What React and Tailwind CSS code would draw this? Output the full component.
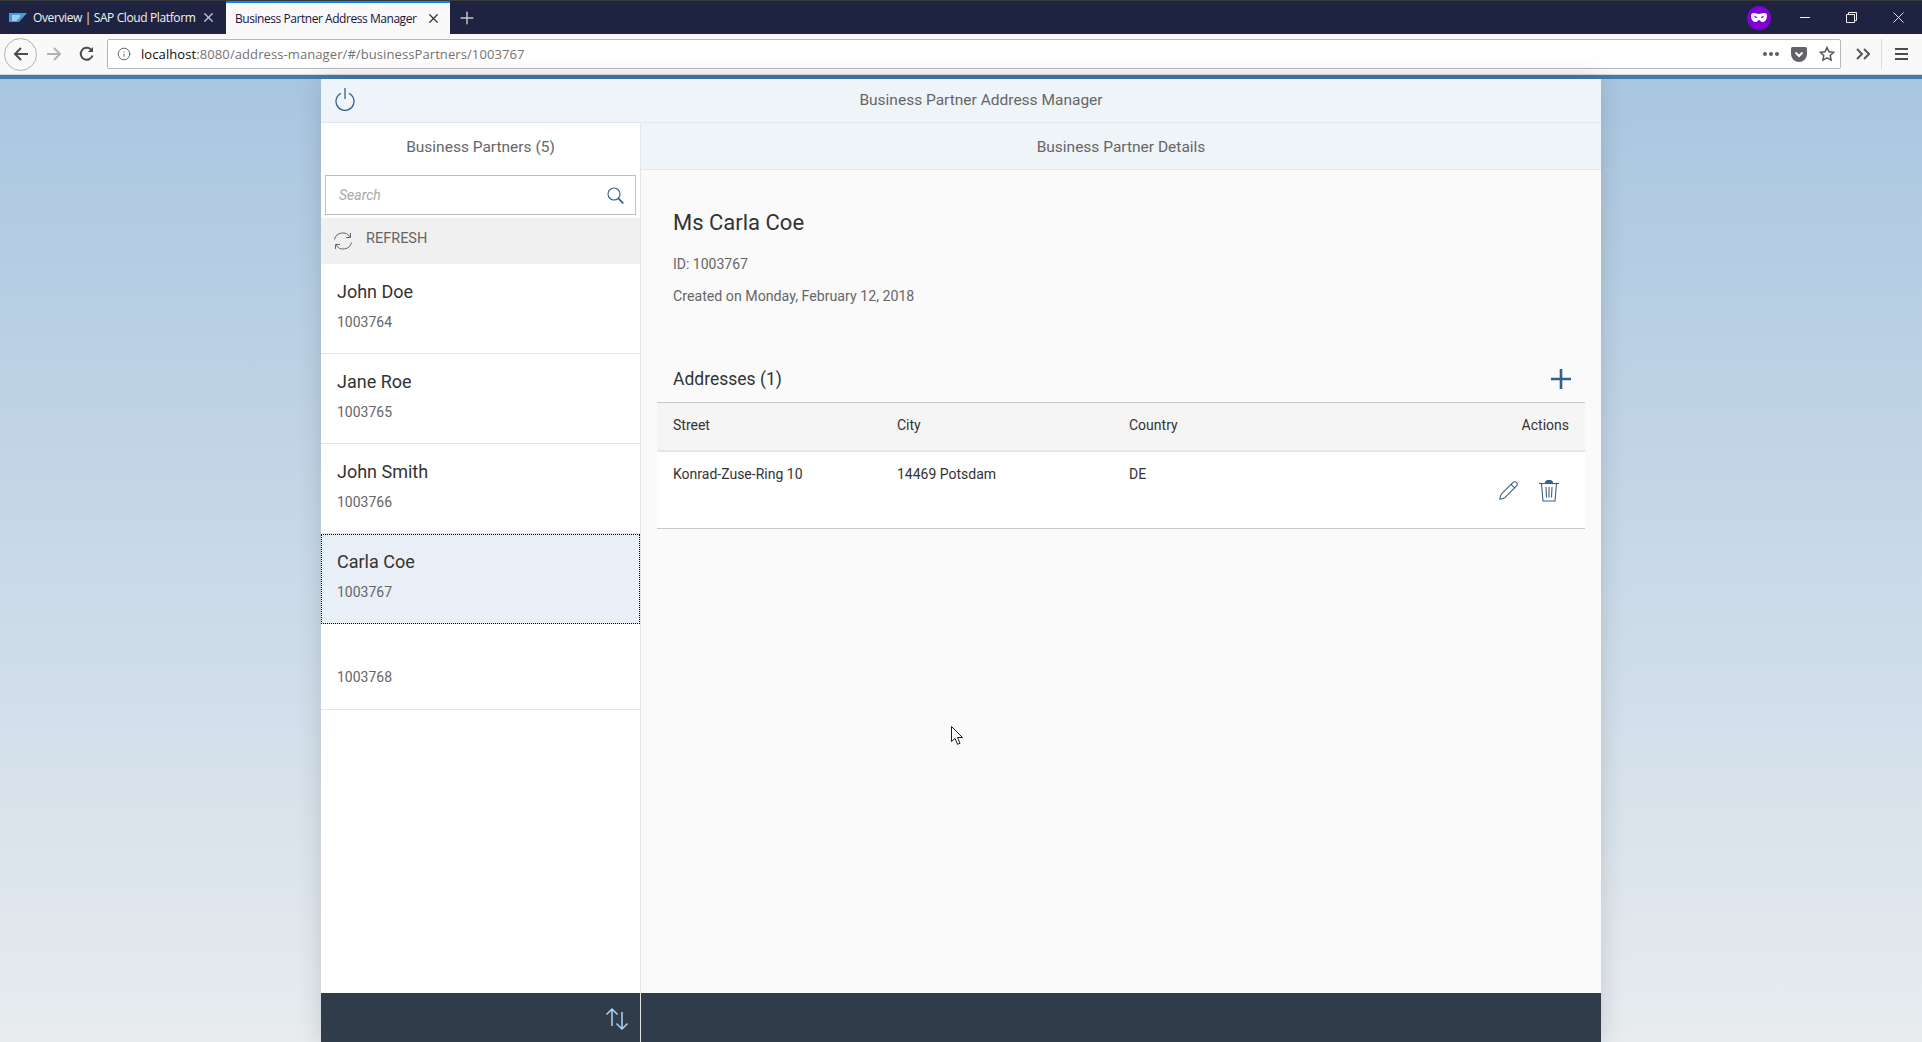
import { Info, Pencil, Plus, X } from 'lucide-react'

const PARTNERS = [
  { id: '1003764', name: 'John Doe' },
  { id: '1003765', name: 'Jane Roe' },
  { id: '1003766', name: 'John Smith' },
  { id: '1003767', name: 'Carla Coe', selected: true },
  { id: '1003768', name: '' },
]

function SapLogo() {
  return (
    <svg width="18" height="10" viewBox="0 0 18 10" className="shrink-0">
      <path d="M0 0h18l-8 9H0z" fill="#3f9fe0" />
      <path d="M3 3h8M3 5h7M3 7h5" stroke="#fff" strokeWidth="1" />
    </svg>
  )
}

function PartnerRow({ partner }) {
  if (partner.selected) {
    return (
      <div className="h-[90px] shrink-0 bg-[#e8eff6] border border-dotted border-black pl-[15px] pt-[13px]">
        <div className="text-[18px] leading-[28px] text-[#333]">{partner.name}</div>
        <div className="text-[14px] leading-[20px] mt-[6px] text-[#666]">{partner.id}</div>
      </div>
    )
  }
  return (
    <div className={`${partner.name ? 'h-[90px]' : 'h-[86px]'} shrink-0 border-b border-[#e5e5e5] pl-4 ${partner.name ? 'pt-[14px]' : 'pt-[43px]'}`}>
      {partner.name && <div className="text-[18px] leading-[28px] text-[#333]">{partner.name}</div>}
      <div className={`text-[14px] leading-[20px] text-[#666] ${partner.name ? 'mt-[6px]' : ''}`}>{partner.id}</div>
    </div>
  )
}

function BrowserChrome() {
  return (
    <div className="shrink-0 font-['Open_Sans',sans-serif]">
      <div className="h-[34px] bg-[#1f2342] border-t border-[#3a3a3a] flex items-stretch">
        <div className="w-[226px] flex items-center pl-[9px] text-[12px] text-[#f2f2f2]">
          <SapLogo />
          <span className="ml-[6px] tracking-[-0.38px] whitespace-nowrap">Overview | SAP Cloud Platform</span>
          <X size={15} strokeWidth={2} className="ml-auto mr-[10px] text-[#c8c8d0]" />
        </div>
        <div className="w-[224px] bg-[#f9f9fa] border-t-2 border-[#0a84ff] flex items-center pl-[9px] text-[12px] text-[#20123a]">
          <span className="tracking-[-0.45px] whitespace-nowrap">Business Partner Address Manager</span>
          <X size={15} strokeWidth={2} className="ml-auto mr-[9px] text-[#333]" />
        </div>
        <div className="w-[34px] flex items-center justify-center">
          <Plus size={20} strokeWidth={1.7} className="text-[#c8c8d0]" />
        </div>
        <div className="flex-1" />
        <div className="w-[24px] h-[24px] self-center rounded-full bg-[#8000d7] flex items-center justify-center mr-[11px]">
          <svg width="16" height="9" viewBox="0 0 16 9">
            <path fillRule="evenodd" fill="#fff" d="M0 2.5C0 .8 1.2 0 3 0c2 0 3.5 1 5 1s3-1 5-1c1.800 0 3 .8 3 2.500C16 6.500 14 9 11.500 9 9.500 9 9 7 8 7S6.500 9 4.500 9C2 9 0 6.500 0 2.500zM3 3.500c.6 1.200 2 1.700 3 1.200-.4-1.200-2-1.700-3-1.200zm10 0c-1-.5-2.600 0-3 1.200 1 .5 2.400 0 3-1.200z" />
          </svg>
        </div>
        <div className="w-[46px] flex items-center justify-center">
          <div className="w-[10px] h-px bg-[#f0f0f0]" />
        </div>
        <div className="w-[46px] flex items-center justify-center">
          <svg width="11" height="11" viewBox="0 0 11 11" fill="none" stroke="#f0f0f0">
            <path d="M.5 2.500h8v8h-8zM2.500 2.500v-2h8v8h-2" />
          </svg>
        </div>
        <div className="w-[48px] flex items-center justify-center">
          <svg width="11" height="11" viewBox="0 0 11 11" fill="none" stroke="#f0f0f0" strokeWidth="0.9">
            <path d="M.5.500l10 10M10.500.500l-10 10" />
          </svg>
        </div>
      </div>

      <div className="h-[41px] bg-[#f9f9fa] border-b border-[#d8d8d8] flex items-center">
        <div className="w-[33px] h-[33px] ml-[4px] rounded-full border border-[#b1b1b3] bg-[#f9f9fa] flex items-center justify-center">
          <svg width="16" height="16" viewBox="0 0 16 16" fill="none" stroke="#4a4a4f" strokeWidth="2">
            <path d="M15 8H2M8 2L2 8l6 6" />
          </svg>
        </div>
        <div className="w-[33px] flex justify-center">
          <svg width="16" height="16" viewBox="0 0 16 16" fill="none" stroke="#b1b1b3" strokeWidth="2">
            <path d="M1 8h13M8 2l6 6-6 6" />
          </svg>
        </div>
        <div className="w-[33px] flex justify-center">
          <svg width="16" height="16" viewBox="0 0 16 16" fill="none" stroke="#4a4a4f" strokeWidth="2">
            <path d="M13.500 9.500A6 6 0 1 1 12 3.500" />
            <path d="M14 1v5H9" fill="#4a4a4f" stroke="none" />
          </svg>
        </div>
        <div className="ml-[4px] w-[1734px] h-[30px] bg-white border border-[#b8b8b8] rounded-[2px] flex items-center pl-[9px] text-[13px] pt-[2px]">
          <Info size={14} strokeWidth={1.5} className="text-[#55555a] -mt-[2px]" />
          <span className="ml-[10px] whitespace-nowrap tracking-[0.09px]">
            <span className="text-[#0c0c0d]">localhost</span>
            <span className="text-[#737373]">:8080/address-manager/#/businessPartners/1003767</span>
          </span>
          <div className="ml-auto flex items-center -mt-[2px]">
            <div className="flex gap-[2px] mr-[12px]">
              <i className="w-[4px] h-[4px] rounded-full bg-[#5f5f63]" />
              <i className="w-[4px] h-[4px] rounded-full bg-[#5f5f63]" />
              <i className="w-[4px] h-[4px] rounded-full bg-[#5f5f63]" />
            </div>
            <svg width="16" height="15" viewBox="0 0 16 15" className="mr-[12px]">
              <path d="M1.500 0h13A1.500 1.500 0 0 1 16 1.500V7A8 8 0 0 1 0 7V1.500A1.500 1.500 0 0 1 1.500 0z" fill="#636367" />
              <path d="M4.500 5.500L8 9l3.500-3.500" fill="none" stroke="#fff" strokeWidth="2" />
            </svg>
            <svg width="16" height="16" viewBox="0 0 16 16" fill="none" stroke="#55555a" strokeWidth="1.500" className="mr-[5px]">
              <path d="M8 1.500l2 4.200 4.600.6-3.400 3.200.9 4.600L8 11.900l-4.100 2.200.9-4.600L1.400 6.300 6 5.700z" />
            </svg>
          </div>
        </div>
        <svg width="14" height="12" viewBox="0 0 14 12" fill="none" stroke="#55555a" strokeWidth="2" className="ml-[15px]">
          <path d="M1 1l5 5-5 5M8 1l5 5-5 5" />
        </svg>
        <div className="w-px h-[30px] bg-[#dcdcdc] ml-[11px]" />
        <div className="ml-[13px] w-[13px] flex flex-col gap-[3px]">
          <i className="h-[2px] bg-[#4a4a4f]" />
          <i className="h-[2px] bg-[#4a4a4f]" />
          <i className="h-[2px] bg-[#4a4a4f]" />
        </div>
      </div>
    </div>
  )
}

export default function App() {
  return (
    <div className="relative h-screen overflow-hidden flex flex-col font-['Roboto',sans-serif]">
      <BrowserChrome />
      <div className="h-[4px] shrink-0 bg-[#427cac]" />
      <div className="flex-1 min-h-0 flex justify-center bg-gradient-to-b from-[#a9c6e0] to-[#e8ecef]">
        <div className="w-[1280px] flex flex-col shadow-[0_0_24px_rgba(0,0,0,0.15)]">
          <div className="h-[44px] shrink-0 bg-[#eff4f9] border-b border-[#dfe8f3] flex items-center">
            <div className="w-[40px] pl-[14px] -mt-[4px]">
              <svg width="20" height="24" viewBox="0 0 20 24" fill="none" stroke="#346187" strokeWidth="1.300">
                <path d="M10 1v11" />
                <path d="M6 6.300a9 9 0 1 0 8 0" />
              </svg>
            </div>
            <div className="flex-1 text-center text-[15.5px] text-[#666]">Business Partner Address Manager</div>
          </div>

          <div className="flex-1 min-h-0 flex">
            <div className="w-[319px] shrink-0 bg-white flex flex-col">
              <div className="h-[47px] shrink-0 flex items-center justify-center pt-[3px] text-[15.5px] text-[#666]">Business Partners (5)</div>
              <div className="h-[48px] shrink-0 px-[4px] pt-[5px]">
                <div className="h-[40px] border border-[#bfbfbf] flex items-center pl-[13px] pr-[11px]">
                  <span className="italic text-[14px] text-[#a8a8a8]">Search</span>
                  <svg width="17" height="17" viewBox="0 0 17 17" fill="none" stroke="#346187" strokeWidth="1.100" className="ml-auto">
                    <circle cx="7" cy="7" r="6" />
                    <path d="M11.300 11.300l5 5" strokeWidth="1.700" />
                  </svg>
                </div>
              </div>
              <div className="h-[46px] shrink-0 bg-[#f0f0f0] flex items-center pl-[12px] pb-[4px] text-[14.5px] text-[#666]">
                <svg width="20" height="20" viewBox="0 0 20 20" fill="none" stroke="#666" strokeWidth="1" className="mt-[3px]">
                  <path d="M1.500 8.500A8.500 8.500 0 0 1 17 6" />
                  <path d="M18.500 11.500A8.500 8.500 0 0 1 3 14" />
                  <path d="M17.500 2v4.500H13M2.500 18v-4.500H7" />
                </svg>
                <span className="ml-[13px]">REFRESH</span>
              </div>
              {PARTNERS.map((p) => (
                <PartnerRow key={p.id} partner={p} />
              ))}
              <div className="flex-1" />
              <div className="h-[49px] shrink-0 bg-[#303c4a] flex items-center justify-end pr-[11px]">
                <svg width="24" height="24" viewBox="0 0 24 24" fill="none" stroke="#a9d4fb" strokeWidth="1.500">
                  <path d="M7 20V3M1.500 8.500L7 3l5.500 5.500" />
                  <path d="M17 6v17M11.500 17.500L17 23l5.500-5.500" />
                </svg>
              </div>
            </div>

            <div className="flex-1 min-w-0 flex flex-col border-l border-[#e5e5e5] bg-[#fafafa]">
              <div className="h-[47px] shrink-0 bg-[#eff4f9] border-b border-[#dfe8f3] flex items-center justify-center pt-[3px] text-[15.5px] text-[#666]">
                Business Partner Details
              </div>
              <div className="flex-1 min-h-0 px-4 pt-[37px]">
                <div className="px-4">
                  <div className="text-[22px] leading-[32px] text-[#333]">Ms Carla Coe</div>
                  <div className="mt-[15px] text-[14px] leading-[20px] text-[#666]">ID: 1003767</div>
                  <div className="mt-[11px] text-[14.2px] leading-[20px] text-[#666] translate-y-px">Created on Monday, February 12, 2018</div>
                  <div className="mt-[51px] h-[46px] flex items-center justify-between">
                    <span className="text-[17.5px] text-[#333]">Addresses (1)</span>
                    <svg width="20" height="20" viewBox="0 0 20 20" stroke="#346187" strokeWidth="2.600" className="-mr-[2px]">
                      <path d="M10 0v20M0 10h20" />
                    </svg>
                  </div>
                </div>
                <div className="border-t border-[#c8c8c8]">
                  <div className="h-[49px] bg-[#f5f5f5] border-b-2 border-[#e5e5e5] flex items-center px-4 pb-[2px] text-[14px] text-[#333]">
                    <span className="w-[224px]">Street</span>
                    <span className="w-[232px]">City</span>
                    <span>Country</span>
                    <span className="ml-auto">Actions</span>
                  </div>
                  <div className="h-[77px] bg-white border-b border-[#c8c8c8] flex px-4 text-[14px] text-[#333]">
                    <span className="w-[224px] mt-[12px] h-[20px]">Konrad-Zuse-Ring 10</span>
                    <span className="w-[232px] mt-[12px] h-[20px]">14469 Potsdam</span>
                    <span className="mt-[12px] h-[20px]">DE</span>
                    <div className="ml-auto flex items-start gap-[20px] pt-[28px] pr-[10px]">
                      <Pencil size={21} strokeWidth={1.2} className="text-[#346187]" />
                      <svg width="20" height="22" viewBox="0 0 20 22" fill="none" stroke="#346187" strokeWidth="1.100">
                        <path d="M0 3.500h20" />
                        <path d="M6.500 3c0-2 1-2.500 3.500-2.500s3.500.5 3.500 2.500" fill="#346187" />
                        <path d="M2.500 4l1.500 17h12l1.500-17" />
                        <path d="M7 7l.5 10.500M10 7v10.500M13 7l-.5 10.500" />
                      </svg>
                    </div>
                  </div>
                </div>
              </div>
              <div className="h-[49px] shrink-0 bg-[#303c4a]" />
            </div>
          </div>
        </div>
      </div>

      <svg width="13" height="20" viewBox="0 0 13 20" className="absolute left-[951px] top-[726px]">
        <path d="M.5.500v15l3.500-3.200 2.500 6 2.500-1-2.500-5.800h5z" fill="#fff" stroke="#1a1a2a" strokeWidth="1" />
      </svg>
    </div>
  )
}
